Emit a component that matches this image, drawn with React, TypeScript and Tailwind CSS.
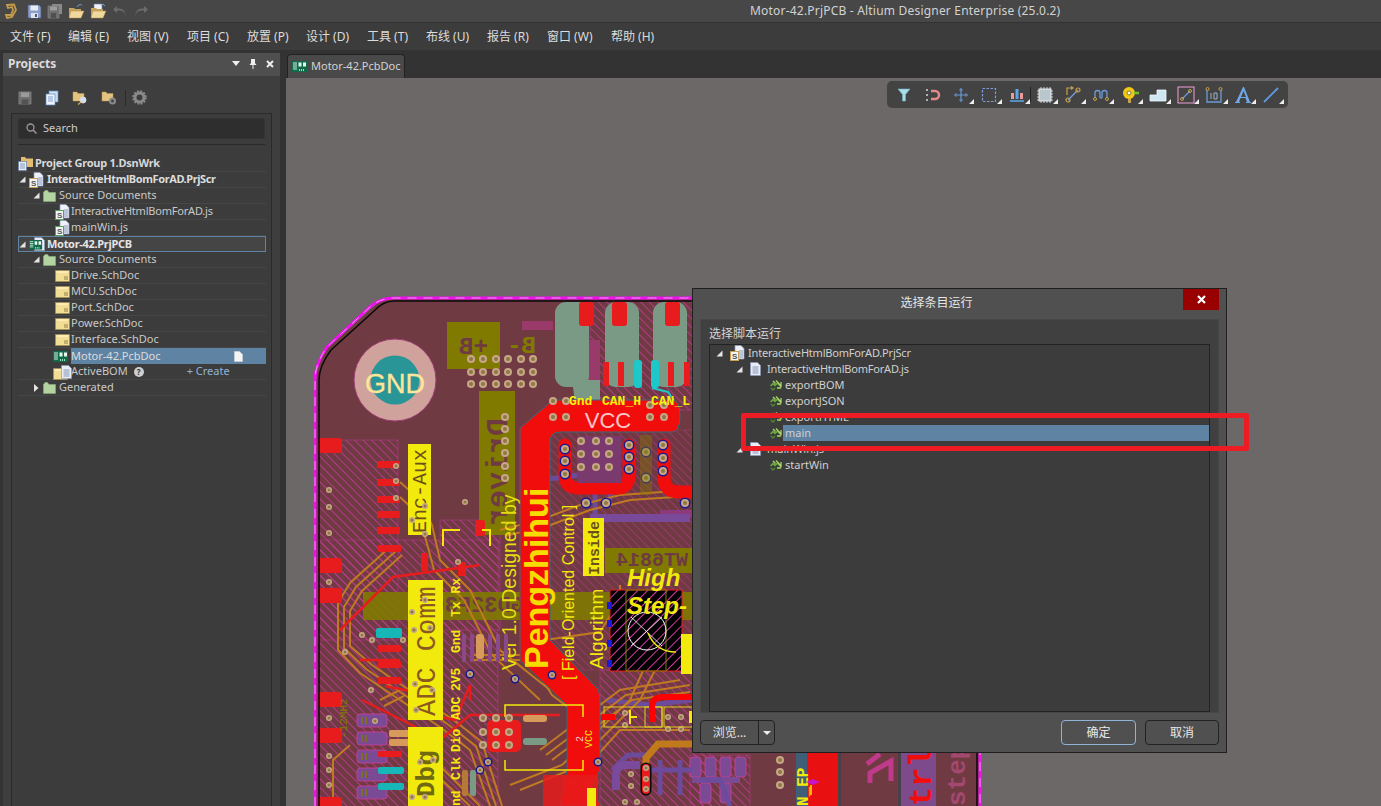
import React from "react";

const font = "font-['Noto_Sans','Noto_Sans_CJK_SC',sans-serif]";

function Floppy({ a = "#8f9fc8", b = "#e8ecf5", size = 15 }: { a?: string; b?: string; size?: number }) {
  return (
    <svg width={size} height={size} viewBox="0 0 15 15">
      <path d="M1 1h11l2 2v11H1z" fill={a} stroke="#4a5684" strokeWidth="0.7" />
      <rect x="3.5" y="1.5" width="7.5" height="5" fill={b} />
      <rect x="4" y="9" width="7" height="5" fill="#dfe3ee" />
      <rect x="8" y="10" width="2" height="3" fill="#4a5684" />
    </svg>
  );
}
function GreyFloppy({ size = 15 }: { size?: number }) {
  return (
    <svg width={size} height={size} viewBox="0 0 15 15">
      <path d="M1 1h13v13H1z" fill="#6f6f6f" stroke="#8a8a8a" strokeWidth="0.7" />
      <rect x="3" y="1.5" width="9" height="5" fill="#9a9a9a" />
      <rect x="4" y="9" width="7" height="5" fill="#535353" />
    </svg>
  );
}
function PrintGrey() {
  return (
    <svg width="16" height="16" viewBox="0 0 16 16">
      <rect x="5" y="1" width="10" height="10" fill="#8a8a8a" />
      <path d="M1 3h11v12H1z" fill="#6e6e6e" stroke="#858585" strokeWidth="0.7" />
      <rect x="3" y="3.5" width="7" height="4" fill="#9c9c9c" />
      <rect x="4" y="10" width="5" height="5" fill="#505050" />
    </svg>
  );
}
function OpenFolder({ doc = false }: { doc?: boolean }) {
  return (
    <svg width="17" height="16" viewBox="0 0 17 16">
      {doc && <rect x="4" y="1" width="8" height="10" fill="#eef2f8" stroke="#6c7fa6" strokeWidth="0.6" />}
      {!doc && <path d="M9 4c1-2 3-3 5-2" fill="none" stroke="#6fa3d8" strokeWidth="1" />}
      {doc && <path d="M11 2c1-1 3-1 4 1" fill="none" stroke="#6fa3d8" strokeWidth="1" />}
      <path d="M1 5h5l1 1h6v8H1z" fill="#c9a45e" />
      <path d="M3 8h13l-3 7H1z" fill="#f1d99d" stroke="#b28f4f" strokeWidth="0.5" />
    </svg>
  );
}
function Undo({ flip = false }: { flip?: boolean }) {
  return (
    <svg width="15" height="13" viewBox="0 0 15 13" style={flip ? { transform: "scaleX(-1)" } : undefined}>
      <path d="M13.5 12c0-5-3-6.500-7-6.500H5V8L1 4.500 5 1v2.500h2c4 0 7 3 6.500 8.500z" fill="#6c6c6c" />
    </svg>
  );
}
function PcbIcon({ w = 15 }: { w?: number }) {
  return (
    <svg width={w} height={(w * 11) / 15} viewBox="0 0 15 11" className="shrink-0">
      <rect width="15" height="11" fill="#0f6b4a" />
      <rect x="1" y="1.500" width="4" height="1" fill="#d8efe4" />
      <rect x="1" y="3.500" width="4" height="1" fill="#d8efe4" />
      <rect x="1" y="5.500" width="4" height="1" fill="#d8efe4" />
      <rect x="1" y="7.500" width="4" height="1" fill="#d8efe4" />
      <rect x="6.500" y="1.500" width="3" height="4" fill="#e9f5ef" />
      <rect x="11" y="1.500" width="3" height="4" fill="#e9f5ef" />
      <rect x="7" y="8" width="1" height="2" fill="#9fe0bf" />
      <rect x="9" y="8" width="1" height="2" fill="#9fe0bf" />
      <rect x="11" y="8" width="1" height="2" fill="#9fe0bf" />
    </svg>
  );
}
function GreenFolder() {
  return (
    <svg width="13" height="12" viewBox="0 0 13 12">
      <path d="M0.500 2.500V11.500H12.500V2.500H6L4.500 0.500H2z" fill="#b3d3a0" stroke="#8fb07c" strokeWidth="0.6" />
    </svg>
  );
}
function ScriptDoc({ frame = "#53a35b" }: { frame?: string }) {
  return (
    <svg width="15" height="16" viewBox="0 0 15 16" className="shrink-0">
      <path d="M5 0.500h6l3 3v10.500H5z" fill="#eef2f8" stroke="#8b9ab9" strokeWidth="0.7" />
      <path d="M9 6h4M9 8h4M9 10h4M9 12h4" stroke="#6980a8" strokeWidth="0.8" />
      <rect x="0.500" y="6.500" width="8" height="9" fill="#f4f4f4" stroke={frame} strokeWidth="1" />
      <text x="2" y="14" fontSize="8" fontWeight="700" fill="#555" fontFamily="Liberation Sans, sans-serif">S</text>
    </svg>
  );
}
function SchDoc() {
  return (
    <svg width="15" height="12" viewBox="0 0 15 12">
      <rect x="0.500" y="0.500" width="14" height="11" fill="#f3dc94" stroke="#a88f4f" strokeWidth="0.6" />
      <path d="M2 2h11" stroke="#fff2c4" strokeWidth="1.500" />
      <path d="M9 7h4M9 9h4" stroke="#7a6a3a" strokeWidth="0.8" />
    </svg>
  );
}
function PlainDoc() {
  return (
    <svg width="11" height="14" viewBox="0 0 11 14" className="shrink-0">
      <path d="M0.500 0.500h7l3 3v10h-10z" fill="#e9edf5" stroke="#8b9ab9" strokeWidth="0.7" />
      <path d="M2.500 5h6M2.500 7h6M2.500 9h6M2.500 11h6" stroke="#6980a8" strokeWidth="0.8" />
    </svg>
  );
}
function RunIcon() {
  return (
    <svg width="12" height="11" viewBox="0 0 12 11">
      <path d="M0.500 6 3 3.500l2 2L7.500 3 11 7" fill="none" stroke="#6fae3e" strokeWidth="1.500" />
      <path d="M3 1l2.500 2.500M6 0.500 11 6V2M11 8H7" fill="none" stroke="#a9d66a" strokeWidth="1.300" />
      <path d="M1 8l2 2 2-2" fill="none" stroke="#4f8a2d" strokeWidth="1.300" />
    </svg>
  );
}
function Arrow({ open = true }: { open?: boolean }) {
  return open ? (
    <svg width="7" height="7" viewBox="0 0 7 7"><path d="M6.500 0.500V6.500H0.500z" fill="#e4e4e4" /></svg>
  ) : (
    <svg width="7" height="8" viewBox="0 0 7 8"><path d="M1 0 5.500 4 1 8z" fill="#e4e4e4" /></svg>
  );
}

const menu: [string, number][] = [
  ["文件 (F)", 58], ["编辑 (E)", 59], ["视图 (V)", 60], ["项目 (C)", 60], ["放置 (P)", 59], ["设计 (D)", 61],
  ["工具 (T)", 59], ["布线 (U)", 61], ["报告 (R)", 60], ["窗口 (W)", 64], ["帮助 (H)", 60],
];

type RowT = {
  t: string; pad: number; arrow?: "o" | "c"; icon?: React.ReactNode; iconW: number; cls?: string;
};

const tight = "tracking-[-0.2px]";
const rows: RowT[] = [
  { t: "InteractiveHtmlBomForAD.PrjScr", pad: 1, arrow: "o", icon: <ScriptDoc frame="#c9a052" />, iconW: 18, cls: "font-bold text-[#dcdcdc] tracking-[-0.4px]" },
  { t: "Source Documents", pad: 15, arrow: "o", icon: <GreenFolder />, iconW: 16 },
  { t: "InteractiveHtmlBomForAD.js", pad: 27, icon: <ScriptDoc />, iconW: 16, cls: tight },
  { t: "mainWin.js", pad: 27, icon: <ScriptDoc />, iconW: 16 },
];
const rows2: RowT[] = [
  { t: "Source Documents", pad: 15, arrow: "o", icon: <GreenFolder />, iconW: 16 },
  { t: "Drive.SchDoc", pad: 27, icon: <SchDoc />, iconW: 16 },
  { t: "MCU.SchDoc", pad: 27, icon: <SchDoc />, iconW: 16 },
  { t: "Port.SchDoc", pad: 27, icon: <SchDoc />, iconW: 16 },
  { t: "Power.SchDoc", pad: 27, icon: <SchDoc />, iconW: 16 },
  { t: "Interface.SchDoc", pad: 27, icon: <SchDoc />, iconW: 16 },
];

function TreeRow({ r }: { r: RowT }) {
  return (
    <div className="h-4 flex items-center border-b border-[#474747] text-[#c9c9c9]" style={{ paddingLeft: r.pad }}>
      <span className="w-[10px] shrink-0 flex items-center">{r.arrow === "o" ? <Arrow /> : r.arrow === "c" ? <Arrow open={false} /> : null}</span>
      <span className="shrink-0 flex items-center" style={{ width: r.iconW }}>{r.icon}</span>
      <span className={"whitespace-nowrap " + (r.cls || "")}>{r.t}</span>
    </div>
  );
}

const hatchId = "hatch";

function Via({ x, y, r = 4, dark = false }: { x: number; y: number; r?: number; dark?: boolean }) {
  return (
    <g>
      {dark && <circle cx={x} cy={y} r={r + 1.500} fill="#1a1a8a" />}
      <circle cx={x} cy={y} r={r} fill="#c9a58a" />
      <circle cx={x} cy={y} r={r * 0.5} fill="#8a7a40" />
    </g>
  );
}

function RT({ x, y, s, size, fill, weight = 400, fam = "Liberation Mono, monospace", style }: { x: number; y: number; s: string; size: number; fill: string; weight?: number; fam?: string; style?: string }) {
  return (
    <text x={x} y={y} transform={`rotate(-90 ${x} ${y})`} fontSize={size} fill={fill} fontWeight={weight} fontFamily={fam} fontStyle={style}>
      {s}
    </text>
  );
}

function Pcb() {
  const vias: [number, number][] = [];
  [471, 483, 496, 508, 521, 533].forEach((x) => [359, 372, 384].forEach((y) => vias.push([x, y])));
  const driverVias: [number, number][] = [417, 429, 441, 453, 466, 478].map((y) => [505, y]);
  const board = "M395 298H980V806H316V380Q316 365 328 348L372 308Q382 298 395 298Z";
  const orange = [
    "M390 547L350 583L338 603V650L360 673L400 700L440 727L470 750L490 806",
    "M396 551L356 587L344 607V648L366 669L406 696L446 723L476 746L496 806",
    "M402 555L362 591L350 611V646L372 665L412 692L452 719L482 742L502 806",
    "M400 482L420 500L432 525L440 560L470 590L500 650L550 690",
    "M400 497L416 512L426 540L434 570L464 600L492 655L540 700",
    "M540 750L620 690L680 680M546 755L626 695L690 685M552 760L632 700L690 692",
    "M520 790L570 770L640 700L660 660M510 785L562 765L630 700L650 655",
    "M470 655H540L560 690L590 715M470 660H530L552 695L585 720",
    "M545 640L600 632L620 600V585M575 780L620 730H690",
    "M500 530L540 520L580 505L620 495L690 490M505 536L548 526L590 510L630 500L690 496",
    "M350 745L333 760V806",
    "M380 700L400 690M384 706L404 696",
    "M420 760L470 806M430 756L480 806",
  ];
  const red = [
    "M340 630L393 577L480 565",
    "M360 660H400",
    "M362 700L402 720L440 740L470 715H560",
    "M470 700V685L455 720L432 715",
    "M385 686L420 693",
  ];
  const purple = [
    "M612 770L628 755H650",
    "M606 700L650 705L692 700",
    "M660 760V795M680 760V795",
    "M650 770H692",
    "M595 520V480M610 500V470",
    "M540 480L620 470",
    "M700 780H720L730 806",
  ];
  return (
    <svg className="absolute inset-0 w-full h-full" viewBox="286 78 1095 728" preserveAspectRatio="none">
      <defs>
        <pattern id={hatchId} width="6" height="6" patternUnits="userSpaceOnUse" patternTransform="rotate(45)">
          <rect width="6" height="0.900" fill="#b93a90" />
        </pattern>
        <pattern id="hatch2" width="7" height="7" patternUnits="userSpaceOnUse" patternTransform="rotate(-45)">
          <rect width="7" height="1" fill="#d43aa8" />
        </pattern>
        <clipPath id="boardClip"><path d={board} /></clipPath>
      </defs>
      <path d={board} fill="#6f3a41" />
      <g clipPath="url(#boardClip)">
        {/* hatched copper */}
        <g fill={`url(#${hatchId})`} stroke="#a83a80" strokeWidth="0.700">
          <rect x="318" y="440" width="80" height="200" />
          <rect x="318" y="540" width="180" height="270" />
          <rect x="590" y="300" width="110" height="110" />
          <rect x="440" y="520" width="60" height="110" />
          <rect x="690" y="755" width="60" height="55" />
          <rect x="530" y="430" width="170" height="240" opacity="0.6" />
          <rect x="600" y="670" width="110" height="140" />
        </g>
        {/* olive */}
        <rect x="447" y="322" width="53" height="47" fill="#807a00" />
        <rect x="479" y="391" width="36" height="144" fill="#807a00" />
        <rect x="363" y="592" width="332" height="28" fill="#807a00" opacity="0.9" />
        <rect x="605" y="548" width="95" height="25" fill="#807a00" />
        {/* silks mirrored */}
        <text transform="translate(488 354) scale(-1 1)" fontSize="24" fontFamily="Liberation Mono, monospace" fontWeight="700" fill="#6f3a41">+B</text>
        <text transform="translate(536 353) scale(-1 1)" fontSize="24" fontFamily="Liberation Mono, monospace" fontWeight="700" fill="#807a00">B-</text>
        <text transform="translate(507 418) rotate(90) scale(1 -1)" fontSize="30" fontFamily="Liberation Mono, monospace" fontWeight="700" fill="#6f3a41">Driver</text>
        <text transform="translate(524 612) scale(-1 1)" fontSize="22" fontFamily="Liberation Mono, monospace" fontWeight="700" fill="#6f3a41">GD32F303</text>
        <text transform="translate(688 566) scale(-1 1)" fontSize="20" fontFamily="Liberation Mono, monospace" fontWeight="700" fill="#6f3a41">WT6814</text>
        <rect x="522" y="321" width="31" height="9" fill="#9a3a6a" />
        <rect x="588" y="340" width="12" height="44" fill="#9a3a6a" />
        {driverVias.map(([x, y], i) => <Via key={i} x={x} y={y} />)}

        {/* connector pads */}
        {[555, 605, 653].map((x) => <rect key={x} x={x} y={302} width={34} height={85} rx={11} fill="#7a9a86" />)}
        <path d="M572 380H600V402H575Z" fill="#7a9a86" />
        <rect x="579" y="302" width="15" height="24" rx="3" fill="#e81c1c" />
        <rect x="612" y="302" width="15" height="24" rx="3" fill="#e81c1c" />
        <rect x="665" y="302" width="15" height="24" rx="3" fill="#e81c1c" />
        {[603, 618, 668, 684].map((x) => <rect key={x} x={x} y={362} width={6} height={24} fill="#e81c1c" />)}
        {[634, 651].map((x) => <rect key={x} x={x} y={360} width={8} height={28} rx={3} fill="#1ec8c8" />)}
        <path d="M652 388L668 392L676 404" stroke="#1ec8c8" strokeWidth="2" fill="none" />

        {/* GND */}
        <circle cx="395" cy="380" r="41" fill="#d0a29c" stroke="#a03b78" strokeWidth="1" />
        <circle cx="395" cy="380" r="24.500" fill="#2a9597" />
        <text x="395" y="393" textAnchor="middle" fontSize="27" fontFamily="Liberation Sans, sans-serif" fill="#ffe59a" stroke="#ffe59a" strokeWidth="0.300">GND</text>

        {vias.map(([x, y], i) => <Via key={i} x={x} y={y} />)}

        {/* lower-left purple pads */}
        {[[357, 714], [357, 732], [357, 750], [357, 768], [357, 786]].map(([x, y], i) => (
          <g key={i}>
            <rect x={x} y={y} width={30} height={13} rx={3} fill="#7a4a94" stroke="#d0409c" strokeWidth="0.800" />
            <path d={`M${x + 5} ${y + 3}v7M${x + 9} ${y + 3}v7`} stroke="#807a00" strokeWidth="1.500" />
          </g>
        ))}
        {[[690, 757], [705, 757], [720, 757], [735, 757], [700, 783], [720, 783]].map(([x, y], i) => (
          <rect key={i} x={x} y={y} width={11} height={20} rx={3} fill="#7a4a94" stroke="#d0409c" strokeWidth="0.800" />
        ))}
        <path d="M692 780H740" stroke="#7a4a94" strokeWidth="6" />

        {/* orange, purple & red tracks */}
        {purple.map((d, i) => <path key={i} d={d} fill="none" stroke="#6c4a9c" strokeWidth="5" />)}
        {orange.map((d, i) => <path key={i} d={d} fill="none" stroke="#bf7a22" strokeWidth="2" />)}
        {red.map((d, i) => <path key={i} d={d} fill="none" stroke="#e81c1c" strokeWidth="2.500" />)}
        <path d="M646 765V758L658 744H700" fill="none" stroke="#c07a1c" strokeWidth="7" />
        <path d="M616 790V775Q616 765 626 765H640" fill="none" stroke="#7a4a9c" strokeWidth="8" />
        <path d="M646 768V790" stroke="#0a0a0a" strokeWidth="11" strokeLinecap="round" />
        <path d="M646 768V790" stroke="#e81c1c" strokeWidth="8" strokeLinecap="round" />
        {[768, 779, 789].map((y) => <Via key={y} x={646} y={y} r={3} />)}
        {[[631, 774], [631, 786], [625, 802], [637, 802], [625, 713], [625, 725], [668, 717], [668, 729], [681, 717], [681, 729]].map(([x, y], i) => <Via key={i} x={x} y={y} r={3} />)}

        {/* copper pour VCC */}
        <path d="M553 400H672Q680 400 680 416 680 432 672 432H560Q550 432 550 442V640L597 688Q600 692 600 700V770L590 790 602 806H560L567 770V705L520 660V428Z" fill="#f20d0d" stroke="#3a6a7a" strokeWidth="1" />
        <path d="M565 445V475Q565 488 578 488H618Q629 488 629 475V445" fill="none" stroke="#f20d0d" strokeWidth="13" strokeLinecap="round" />
        <path d="M664 445V478Q664 492 680 492H700" fill="none" stroke="#f20d0d" strokeWidth="13" strokeLinecap="round" />
        <text x="608" y="428" textAnchor="middle" fontSize="22" fontFamily="Liberation Sans, sans-serif" fill="#f8c7c7">VCC</text>

        {/* pads with vias */}
        <rect x="577" y="436" width="44" height="47" fill="#7a3a6e" />
        {[581, 596, 609].map((x) => [441, 454, 467].map((y) => <Via key={x + "-" + y} x={x} y={y} />))}
        {[[553, 401], [566, 401], [553, 417], [566, 417], [650, 405], [664, 405], [650, 417], [664, 417]].map(([x, y], i) => <Via key={i} x={x} y={y} />)}
        {[[565, 449], [565, 461], [565, 474], [629, 445], [629, 457], [629, 469], [663, 445], [663, 458], [663, 471], [646, 452], [646, 478]].map(([x, y], i) => <Via key={i} x={x} y={y} dark />)}
        {[[586, 503], [606, 503], [685, 503]].map(([x, y], i) => <Via key={i} x={x} y={y} dark />)}
        <rect x="640" y="435" width="12" height="60" fill="#807a00" opacity="0.4" />
        <rect x="660" y="510" width="35" height="8" fill="#8d3a7a" />
        <rect x="590" y="514" width="100" height="8" fill="#7a4a9a" />

        {/* left pads */}
        {[[318, 438], [318, 558], [318, 588], [318, 692], [318, 728], [318, 797]].map(([x, y], i) => <rect key={i} x={x} y={y} width={24} height={15} rx={3} fill="#e81c1c" />)}
        {[[377, 461], [377, 479], [377, 496], [377, 511], [377, 527], [378, 545], [378, 645], [378, 661], [378, 677]].map(([x, y], i) => <rect key={i} x={x} y={y} width={23} height={7} rx={1} fill="#e81c1c" />)}
        <rect x="378" y="751" width="24" height="6" rx="1" fill="#e81c1c" />
        <rect x="376" y="628" width="26" height="10" rx="2" fill="#17b7b7" />
        <rect x="378" y="767" width="26" height="7" rx="2" fill="#17b7b7" />
        <rect x="378" y="783" width="26" height="7" rx="2" fill="#17b7b7" />
        <rect x="389" y="730" width="24" height="7" rx="2" fill="#d89a5a" />
        <rect x="389" y="739" width="24" height="7" rx="2" fill="#d89a5a" />
        <rect x="458" y="562" width="8" height="14" fill="#e81c1c" />
        <rect x="421" y="553" width="7" height="18" fill="#e81c1c" />
        <rect x="475" y="520" width="10" height="16" rx="2" fill="#e81c1c" />
        <path d="M443 546V530H460M482 530H490V546" fill="none" stroke="#f5e60a" strokeWidth="2" />
        {[[329, 490], [329, 507], [329, 533], [329, 582], [329, 718], [329, 756], [329, 770], [329, 785], [345, 652], [362, 635], [372, 640], [396, 466], [396, 481], [396, 498], [465, 502], [375, 721], [403, 640], [458, 562], [371, 690]].map(([x, y], i) => <Via key={i} x={x} y={y} r={3} />)}

        {/* yellow silk tags */}
        <rect x="408" y="444" width="23" height="91" fill="#f2e90d" />
        <RT x={426} y={533} s="Enc-Aux" size={20} fill="#6d4f1c" />
        <rect x="408" y="580" width="35" height="140" fill="#f2e90d" />
        <RT x={435} y={716} s="ADC Comm" size={27} fill="#8a5a20" />
        <rect x="408" y="727" width="35" height="79" fill="#f2e90d" />
        <RT x={434} y={797} s="Dbg" size={26} fill="#6f6a10" weight={700} />
        <rect x="583" y="518" width="21" height="58" fill="#f2e90d" />
        <RT x={599} y={575} s="Inside" size={15} fill="#6d4f1c" weight={700} />
        {[[425, 506], [412, 520], [425, 534], [412, 612], [425, 600], [414, 630], [430, 628], [415, 684], [432, 690], [416, 710], [420, 762], [433, 760], [412, 797], [425, 797]].map(([x, y], i) => <Via key={i} x={x} y={y} r={3} />)}

        <RT x={460} y={617} s="Tx Rx" size={13} fill="#f2e90d" weight={700} />
        <RT x={460} y={653} s="Gnd" size={13} fill="#f2e90d" weight={700} />
        <RT x={460} y={691} s="2V5" size={13} fill="#f2e90d" weight={700} />
        <RT x={460} y={720} s="ADC" size={13} fill="#f2e90d" weight={700} />
        <RT x={460} y={752} s="Dio" size={13} fill="#f2e90d" weight={700} />
        <RT x={460} y={780} s="Clk" size={13} fill="#f2e90d" weight={700} />
        <RT x={460} y={806} s="nd" size={13} fill="#f2e90d" weight={700} />

        <RT x={516} y={670} s="Ver 1.0 Designed by" size={19.500} fill="#e4dd10" fam="Liberation Sans, sans-serif" />
        <RT x={548} y={669} s="Pengzhihui" size={34} fill="#f7dc00" weight={700} fam="Liberation Sans, sans-serif" />
        <RT x={574} y={680} s="[ Field-Oriented Control ]" size={16} fill="#f2e90d" fam="Liberation Sans, sans-serif" />
        <RT x={603} y={669} s="Algorithm" size={19} fill="#f2e90d" fam="Liberation Sans, sans-serif" />
        <g fontSize="13" fontWeight="700" fontFamily="Liberation Mono, monospace" fill="#f5f00a">
          <text x="569" y="405">Gnd</text>
          <text x="602" y="405">CAN_H</text>
          <text x="651" y="405">CAN_L</text>
        </g>

        {/* chip */}
        <rect x="610" y="590" width="72" height="81" fill="#000" />
        <rect x="610" y="590" width="72" height="81" fill="url(#hatch2)" stroke="#e81c1c" strokeWidth="1" />
        <rect x="626" y="590" width="40" height="81" fill="none" stroke="#807a00" strokeWidth="1" />
        <circle cx="647" cy="631" r="19" fill="none" stroke="#fff" strokeWidth="1" />
        <path d="M631 646L662 617M631 617L662 646" stroke="#fff" strokeWidth="0.800" />
        <path d="M648 633Q656 652 676 652" fill="none" stroke="#f2e90d" strokeWidth="1.500" />
        {[602, 620, 640, 660].map((y) => <rect key={y} x="607" y={y} width="5" height="7" fill="#1a1ad8" />)}
        <text x="627" y="586" fontSize="24" fontStyle="italic" fontWeight="700" fontFamily="Liberation Sans, sans-serif" fill="#f2e90d">High</text>
        <text x="627" y="614" fontSize="24" fontStyle="italic" fontWeight="700" fontFamily="Liberation Sans, sans-serif" fill="#f2e90d">Step-</text>
        <rect x="681" y="634" width="14" height="40" fill="#f2e90d" />

        {/* lower centre */}
        <path d="M505 717V705H583V717M505 760V770H583V760" fill="none" stroke="#f2e90d" strokeWidth="1.500" />
        <rect x="487" y="720" width="34" height="32" rx="5" fill="#e81c1c" />
        {[[483, 718], [496, 718], [509, 718], [483, 732], [496, 732], [509, 732], [483, 745], [496, 745], [509, 745]].map(([x, y], i) => <Via key={i} x={x} y={y} />)}
        <rect x="523" y="715" width="24" height="7" rx="3" fill="#d89a5a" />
        <rect x="523" y="738" width="24" height="7" rx="3" fill="#7a9a86" />
        {[462, 470, 478, 488, 496, 504].map((x) => <rect key={x} x={x} y={634} width={4} height={28} rx={1} fill="#8a4a8a" />)}
        <rect x="476" y="634" width="8" height="25" rx="3" fill="#d89a5a" />
        <rect x="462" y="770" width="6" height="26" rx="2" fill="#b57a3a" />
        <rect x="470" y="770" width="6" height="26" rx="2" fill="#7a9a86" />
        {[[515, 679], [552, 675], [470, 674], [488, 762], [480, 770], [598, 762]].map(([x, y], i) => <Via key={i} x={x} y={y} r={3} dark />)}
        <RT x={592} y={748} s="VCC" size={10} fill="#f2e90d" />
        <RT x={583} y={742} s="2" size={10} fill="#f6c7c7" />
        <text x="561" y="785" fontSize="9" fontFamily="Liberation Mono, monospace" fill="#e81c1c">YHY-MAJ</text>
        <rect x="604" y="707" width="58" height="20" fill="none" stroke="#e0d020" strokeWidth="1" />
        <rect x="645" y="707" width="17" height="20" fill="none" stroke="#e0d020" strokeWidth="1" />
        <rect x="664" y="707" width="40" height="20" fill="none" stroke="#e0d020" strokeWidth="1" />
        <path d="M602 717H615M652 722V706Q652 698 662 697H694" stroke="#f00" strokeWidth="6" fill="none" />
        <path d="M630 710V724M630 717H637" stroke="#f2e90d" strokeWidth="2" fill="none" />
        <rect x="689" y="711" width="3" height="12" fill="#f2e90d" />
        <rect x="543" y="775" width="55" height="31" fill="#e81c1c" opacity="0.85" />
        <rect x="587" y="788" width="9" height="18" fill="#f2e90d" />
        <RT x={347} y={738} s="-12MHz" size={11} fill="#807a00" />
        {/* bottom right below dialog */}
        <rect x="796" y="752" width="11" height="54" fill="#3f5f78" />
        <rect x="807" y="752" width="31" height="54" fill="#e81010" />
        <RT x={808} y={806} s="N_EP" size={16} fill="#f2e90d" weight={700} />
        <path d="M806 782l7-3 7 3-7 3z" fill="#c814c8" />
        <path d="M811 785v10" stroke="#f2e90d" strokeWidth="1.500" />
        <rect x="838" y="752" width="3" height="54" fill="#4a4048" />
        <rect x="898" y="752" width="3" height="54" fill="#4a4048" />
        <rect x="901" y="752" width="35" height="54" fill="#7d4a8c" />
        <path d="M867 764L880 754M870 783V773L891 761V781" fill="none" stroke="#c03a8c" strokeWidth="5" />
        <RT x={931} y={806} s="trl" size={32} fill="#f20d0d" weight={700} />
        <RT x={965} y={806} s="step" size={26} fill="#a3486f" weight={700} />
        {[760, 772, 785].map((y) => <Via key={y} x={780} y={y} />)}
      </g>
      {/* outline */}
      <path d="M394 301H977V806M319 806V380Q319 366 331 350L374 311Q383 301 394 301" fill="none" stroke="#0a0a0a" strokeWidth="1.500" />
      <path d="M980 298V806M315 806V380Q315 364 327 347L371 306Q381 298 394 298H980" fill="none" stroke="#f010f0" strokeWidth="3" />
      <path d="M980 298V806M315 806V380Q315 364 327 347L371 306Q381 298 394 298H980" fill="none" stroke="#e8c0e8" strokeWidth="0.800" strokeDasharray="9 7" />
    </svg>
  );
}

function Corner() {
  return <svg className="absolute right-[1px] bottom-[1px]" width="5" height="5" viewBox="0 0 5 5"><path d="M5 0V5H0z" fill="#eee" /></svg>;
}

function ToolIcon({ children, corner = true }: { children: React.ReactNode; corner?: boolean }) {
  return (
    <div className="relative w-[28.300px] h-5 flex items-center justify-center">
      <svg width="18" height="18" viewBox="0 0 18 18">{children}</svg>
      {corner && <Corner />}
    </div>
  );
}

function PcbToolbar() {
  const o = "#c8a04a";
  return (
    <div className="absolute left-[601px] top-[3px] w-[401px] h-[27px] bg-[#434343] rounded-[5px] flex items-center pl-[3px]">
      <ToolIcon corner={false}><path d="M3 3h12l-4.500 5.500V15h-3V8.500z" fill="#a8dce8" stroke="#6fb4c8" strokeWidth="0.600" /></ToolIcon>
      <ToolIcon corner={false}><path d="M8 5h4a4 4 0 0 1 0 8H8" fill="none" stroke="#e58a8a" strokeWidth="2.500" /><path d="M3 4h3M3 9h3M3 14h3" stroke="#cfd8dc" strokeWidth="1.500" strokeDasharray="2 1" /></ToolIcon>
      <ToolIcon><path d="M9 2v14M2 9h14" stroke="#6c9ad8" strokeWidth="1.200" /><path d="M7 4h4M7 14h4M4 7v4M14 7v4" stroke="#6c9ad8" strokeWidth="0.800" /></ToolIcon>
      <ToolIcon><rect x="2.500" y="2.500" width="13" height="13" fill="none" stroke="#7c9ee0" strokeWidth="1.200" strokeDasharray="2.500 1.500" /></ToolIcon>
      <ToolIcon>
        <rect x="3" y="7" width="3" height="6" fill="#ee9a9a" /><rect x="7.500" y="3" width="3" height="10" fill="#5aa9e6" /><rect x="12" y="7" width="3" height="6" fill="#ee9a9a" /><path d="M2 15h14" stroke="#5aa9e6" strokeWidth="1.500" />
      </ToolIcon>
      <div className="w-px h-[15px] bg-[#222] -mx-px" />
      <ToolIcon><rect x="3" y="3" width="12" height="12" fill="#b9c6cc" stroke="#e8eef0" strokeWidth="1" /><path d="M5 1v2M8 1v2M11 1v2M14 1v2M5 15v2M8 15v2M11 15v2M14 15v2M1 5h2M1 8h2M1 11h2M1 14h2M15 5h2M15 8h2M15 11h2M15 14h2" stroke="#e8eef0" strokeWidth="0.800" /></ToolIcon>
      <ToolIcon><path d="M4 14L14 4" stroke="#6c9ad8" strokeWidth="1.500" /><circle cx="4" cy="14" r="2" fill="none" stroke={o} strokeWidth="1.200" /><circle cx="14" cy="4" r="2" fill="none" stroke={o} strokeWidth="1.200" /><path d="M3 9V2h6M7 0.500 9 2 7 3.500" fill="none" stroke={o} strokeWidth="1.200" /></ToolIcon>
      <ToolIcon><path d="M3 12V7a2.500 2.500 0 0 1 5 0v4a1 1 0 0 0 2 0V7a2.500 2.500 0 0 1 5 0v5" fill="none" stroke="#6c9ad8" strokeWidth="1.300" /><circle cx="3" cy="13" r="1.500" fill="none" stroke={o} /><circle cx="15" cy="13" r="1.500" fill="none" stroke={o} /></ToolIcon>
      <ToolIcon><rect x="7" y="11" width="3" height="6" fill={o} /><circle cx="8" cy="7" r="6" fill="#f0c814" /><circle cx="8" cy="7" r="2" fill="#fff" stroke="#8a7a20" /><path d="M13 7h5" stroke="#74c22a" strokeWidth="2.500" /></ToolIcon>
      <ToolIcon><path d="M1 15V9h7V4h9v11z" fill="#cfe6f2" stroke="#eef8fc" strokeWidth="0.800" /></ToolIcon>
      <ToolIcon><rect x="1" y="1" width="16" height="16" fill="none" stroke="#f0a0d8" strokeWidth="1" /><path d="M5 13L13 5" stroke="#6c9ad8" strokeWidth="1.300" /><circle cx="5" cy="13" r="1.500" fill="none" stroke={o} /><circle cx="13" cy="5" r="1.500" fill="none" stroke={o} /></ToolIcon>
      <ToolIcon>
        <path d="M2 4V16H16V4" fill="none" stroke="#6c9ad8" strokeWidth="1.300" /><circle cx="2.500" cy="3" r="1.500" fill="none" stroke={o} /><circle cx="15.500" cy="3" r="1.500" fill="none" stroke={o} /><path d="M6 7v6M9 7h3v6H9z" fill="none" stroke="#9fb4c8" strokeWidth="1" />
      </ToolIcon>
      <ToolIcon><path d="M9 1h1l6 15h1v1h-5v-1h1l-1.500-4h-5L5 16h1v1H1v-1h1zM9.500 5 7 11h5z" fill="#6fa8e8" /></ToolIcon>
      <ToolIcon><path d="M2 16L16 2" stroke="#5f9ae0" strokeWidth="1.800" /></ToolIcon>
    </div>
  );
}

function DlgRow({ left, arrow, icon, iconW, iconPad = 0, t, sel, cls }: { left: number; arrow?: boolean; icon: React.ReactNode; iconW: number; iconPad?: number; t: string; sel?: boolean; cls?: string }) {
  return (
    <div className="h-4 flex items-center" style={{ paddingLeft: left }}>
      <span className="w-[11px] shrink-0 flex items-center">{arrow && <Arrow />}</span>
      <span className="shrink-0 flex items-center" style={{ width: iconW, paddingLeft: iconPad }}>{icon}</span>
      <span className={"h-4 leading-4 whitespace-nowrap text-[#d0d0d0] " + (cls || "") + (sel ? " flex-1 bg-[#5f83a3] pl-[2px] -ml-[2px]" : "")}>{t}</span>
    </div>
  );
}

function Dialog() {
  return (
    <div className="absolute left-[406px] top-[210px] w-[535px] h-[465px] bg-[#505050] border border-[#1f1f1f] flex flex-col px-[7px] text-[11px] text-[#d4d4d4]">
      <div className="relative h-[30px] shrink-0 flex items-center justify-center text-[12px] text-[#e6e6e6] pb-[2px] pr-[46px]">
        选择条目运行
        <div className="absolute right-[0px] top-0 w-[36px] h-[21px] bg-[#990000] flex items-center justify-center">
          <svg width="9" height="9" viewBox="0 0 9 9"><path d="M1 1l7 7M8 1 1 8" stroke="#fff" strokeWidth="2.200" /></svg>
        </div>
      </div>
      <div className="h-[394px] shrink-0 bg-[#404040] border border-[#484848] px-2 flex flex-col">
        <div className="h-[24px] shrink-0 flex items-end pb-[1px] text-[12px] text-[#d4d4d4]">选择脚本运行</div>
        <div className="flex-1 bg-[#3c3c3c] border border-[#222]">
          <DlgRow left={6} arrow iconW={21} iconPad={3} icon={<ScriptDoc frame="#c9a052" />} t="InteractiveHtmlBomForAD.PrjScr" cls={tight} />
          <DlgRow left={26} arrow iconW={20} iconPad={3} icon={<PlainDoc />} t="InteractiveHtmlBomForAD.js" cls={tight} />
          <DlgRow left={49} iconW={15} icon={<RunIcon />} t="exportBOM" />
          <DlgRow left={49} iconW={15} icon={<RunIcon />} t="exportJSON" />
          <DlgRow left={49} iconW={15} icon={<RunIcon />} t="exportHTML" />
          <DlgRow left={49} iconW={15} icon={<RunIcon />} t="main" sel />
          <DlgRow left={26} arrow iconW={20} iconPad={3} icon={<PlainDoc />} t="mainWin.js" />
          <DlgRow left={49} iconW={15} icon={<RunIcon />} t="startWin" />
        </div>
      </div>
      <div className="flex items-center justify-between mt-[7px] text-[12px]">
        <div className="w-[75px] h-[25px] border border-[#222] rounded-[4px] flex items-center">
          <span className="flex-1 text-center text-[#e2e2e2]">浏览...</span>
          <span className="w-px h-full bg-[#222]" />
          <span className="w-[15px] flex justify-center">
            <svg width="8" height="4" viewBox="0 0 8 4"><path d="M0 0h8L4 4z" fill="#eee" /></svg>
          </span>
        </div>
        <div className="flex gap-[9px]">
          <div className="w-[75px] h-[25px] border border-[#8fb4d8] rounded-[4px] flex items-center justify-center text-[#e8e8e8]">确定</div>
          <div className="w-[74px] h-[25px] border border-[#222] rounded-[4px] flex items-center justify-center text-[#e8e8e8]">取消</div>
        </div>
      </div>
    </div>
  );
}

export default function App() {
  return (
    <div className={"w-[1381px] h-[806px] overflow-hidden flex flex-col bg-[#333] relative " + font}>
      <div className="h-[22px] shrink-0 bg-[#474747] flex items-center">
        <div className="w-[750px] shrink-0 flex items-center pl-[5px] gap-[5px]">
          <svg width="12" height="16" viewBox="0 0 12 16" className="mr-[5px]"><path d="M2 2 9 1.500 11 7 7 14 2 15 1 12 6 12 8 7 7 4 3 5z" fill="none" stroke="#c49a4c" strokeWidth="1.800" /></svg>
          <Floppy />
          <PrintGrey />
          <OpenFolder />
          <OpenFolder doc />
          <Undo />
          <span className="ml-[2px]"><Undo flip /></span>
        </div>
        <span className="text-[12px] text-[#d2d2d2] whitespace-nowrap tracking-[0.2px]">Motor-42.PrjPCB - Altium Designer Enterprise (25.0.2)</span>
      </div>
      <div className="h-[28px] shrink-0 bg-[#3c3c3c] border-t border-[#333] flex items-center pl-[10px] text-[12px] text-[#dcdcdc]">
        {menu.map(([m, w]) => (
          <span key={m} className="shrink-0 whitespace-nowrap" style={{ width: w }}>{m}</span>
        ))}
      </div>
      <div className="flex-1 flex min-h-0 pt-[3px] bg-[#333]">
        <div className="w-[277px] ml-[3px] shrink-0 flex flex-col bg-[#3e3e3e]">
          <div className="h-[23px] shrink-0 bg-[#4f4f4f] flex items-center justify-between pl-[5px] pr-[6px] pb-[2px]">
            <span className="text-[12px] font-bold text-[#dcdcdc]">Projects</span>
            <div className="flex items-center gap-[9px]">
              <svg width="8" height="5" viewBox="0 0 8 5"><path d="M0 0h8L4 5z" fill="#eee" /></svg>
              <svg width="8" height="10" viewBox="0 0 8 10"><path d="M2 0h4v4l1.500 2h-3v4h-1V6H0.500L2 4z" fill="#eee" /></svg>
              <svg width="8" height="8" viewBox="0 0 8 8"><path d="M1 1l6 6M7 1 1 7" stroke="#eee" strokeWidth="2" /></svg>
            </div>
          </div>
          <div className="h-[37px] shrink-0 flex items-center pl-[15px] gap-[13px] pt-[6px]">
            <GreyFloppy size={14} />
            <svg width="14" height="16" viewBox="0 0 14 16"><rect x="4" y="1" width="9" height="11" fill="#cfe0f2" stroke="#5f8ac0" strokeWidth="0.700" /><rect x="1" y="4" width="9" height="11" fill="#eef4fa" stroke="#5f8ac0" strokeWidth="0.700" /><path d="M3 7h5M3 9h5M3 11h5" stroke="#5f8ac0" strokeWidth="0.800" /></svg>
            <svg width="16" height="14" viewBox="0 0 16 14"><path d="M1 1h4l1 1.500h6V10H1z" fill="#e3c47f" stroke="#b89a58" strokeWidth="0.500" /><circle cx="11" cy="9" r="3" fill="#cfe0f2" stroke="#ddd" /><path d="M9 11l-3 2.500" stroke="#caa254" strokeWidth="1.500" /></svg>
            <svg width="16" height="14" viewBox="0 0 16 14"><path d="M1 1h4l1 1.500h6V10H1z" fill="#e3c47f" stroke="#b89a58" strokeWidth="0.500" /><circle cx="11.500" cy="10" r="3.500" fill="#8a8a8a" /><circle cx="11.500" cy="10" r="1.500" fill="#444" /></svg>
            <span className="w-px h-4 bg-[#2c2c2c] -mx-[5px]" />
            <svg width="15" height="15" viewBox="0 0 15 15" className="-ml-[2px]"><circle cx="7.500" cy="7.500" r="4.500" fill="none" stroke="#8a8a8a" strokeWidth="3" /><circle cx="7.500" cy="7.500" r="6.500" fill="none" stroke="#8a8a8a" strokeWidth="1.500" strokeDasharray="2 1.400" /></svg>
          </div>
          <div className="flex-1 mx-[8px] border border-[#2a2a2a] border-b-0 bg-[#3c3c3c] px-[6px] pt-[4px] text-[11px] text-[#c9c9c9] min-h-0">
            <div className="h-[21px] bg-[#2e2e2e] border border-[#333] rounded-[3px] flex items-center pl-[7px] gap-[6px] text-[#cfcfcf]">
              <svg width="11" height="11" viewBox="0 0 11 11"><circle cx="4.500" cy="4.500" r="3.500" fill="none" stroke="#999" strokeWidth="1.300" /><path d="M7 7l3.500 3.500" stroke="#999" strokeWidth="1.500" /></svg>
              Search
            </div>
            <div className="h-px bg-[#2a2a2a] mt-[5px]" />
            <div className="pt-[11px] -mr-[1px]">
              <div className="h-4 flex items-center font-bold text-[#d8d8d8] border-b border-[#474747] tracking-[-0.25px]">
                <span className="w-[17px] shrink-0 flex">
                  <svg width="16" height="15" viewBox="0 0 16 15"><path d="M3 1h4l1 1.500h7V11H3z" fill="#e3bd72" /><rect x="0.500" y="5.500" width="8" height="9" fill="#e8eef8" stroke="#6980a8" strokeWidth="0.700" /><path d="M2 8h5M2 10h5M2 12h5" stroke="#6980a8" strokeWidth="0.800" /></svg>
                </span>
                Project Group 1.DsnWrk
              </div>
              {rows.map((r) => <TreeRow key={r.t} r={r} />)}
              <div className="h-[16px] flex items-center border border-[#5f83a3] bg-[#454545] font-bold text-[#e4e4e4] tracking-[-0.3px]">
                <span className="w-[10px] shrink-0 flex"><Arrow /></span>
                <span className="relative w-[18px] h-[14px] shrink-0">
                  <span className="absolute left-[5px] top-0"><PlainDoc /></span>
                  <span className="absolute left-0 top-[3px]"><PcbIcon w={13} /></span>
                </span>
                Motor-42.PrjPCB
              </div>
              {rows2.map((r, i) => <TreeRow key={i} r={r} />)}
              <div className="h-4 flex items-center relative" style={{ paddingLeft: 35 }}>
                <span className="w-[18px] shrink-0 flex"><PcbIcon w={15} /></span>
                <span className="flex-1 bg-[#5f83a3] h-4 flex items-center text-[#dcdcdc] justify-between pr-[23px]">
                  <span>Motor-42.PcbDoc</span>
                  <svg width="9" height="11" viewBox="0 0 9 11"><path d="M0.500 0.500h5l3 3v7h-8z" fill="#f4f4f4" stroke="#ddd" strokeWidth="0.500" /></svg>
                </span>
              </div>
              <div className="h-4 flex items-center border-b border-[#474747]" style={{ paddingLeft: 35 }}>
                <span className="relative w-[18px] h-[14px] shrink-0">
                  <span className="absolute left-0 top-[3px]"><SchDoc /></span>
                  <span className="absolute left-[8px] top-0"><PlainDoc /></span>
                </span>
                <span>ActiveBOM</span>
                <span className="ml-[6px] w-[10px] h-[10px] rounded-full bg-[#cfcfcf] text-[#333] text-[8px] font-bold leading-[10px] text-center">?</span>
                <span className="ml-[43px] text-[#8fb4d8]">+ Create</span>
              </div>
              <TreeRow r={{ t: "Generated", pad: 15, arrow: "c", icon: <GreenFolder />, iconW: 16 }} />
            </div>
          </div>
        </div>
        <div className="flex-1 flex flex-col min-w-0 ml-[6px]">
          <div className="h-[25px] shrink-0 bg-[#333] flex items-end">
            <div className="w-[118px] h-[24px] ml-[1px] bg-[#494949] border border-[#222] border-b-0 rounded-t-[4px] flex items-center pl-[4px] gap-[4px] text-[11px] text-[#d2d2d2] whitespace-nowrap">
              <PcbIcon w={15} />
              Motor-42.PcbDoc
            </div>
          </div>
          <div className="flex-1 relative bg-[#6c6867] overflow-visible">
            <div className="absolute inset-0 overflow-hidden"><Pcb /></div>
            <PcbToolbar />
            <Dialog />
            <div className="absolute left-[455px] top-[335px] w-[508px] h-[38px] border-[5px] border-[#ed1c24] rounded-[2px]" />
          </div>
        </div>
      </div>
    </div>
  );
}
